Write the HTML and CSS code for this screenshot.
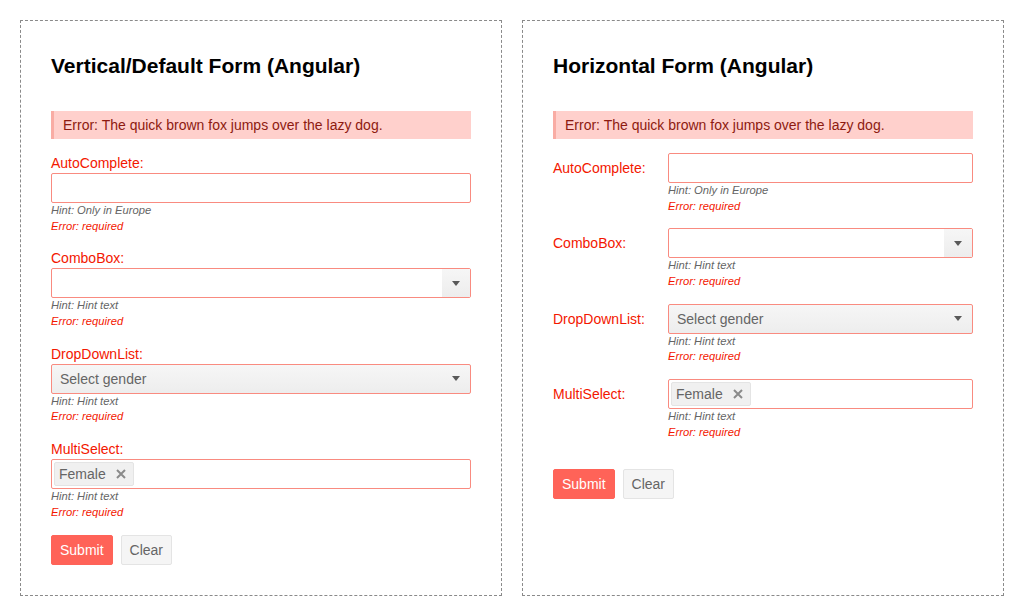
FILE: index.html
```html
<!DOCTYPE html>
<html>
<head>
<meta charset="utf-8">
<link rel="stylesheet" href="styles.css">
</head>
<body>
<div class="page">
  <section class="panel">
    <h2 class="title">Vertical/Default Form (Angular)</h2>
    <div class="banner">Error: The quick brown fox jumps over the lazy dog.</div>
    <div class="field vfield">
      <label class="lbl">AutoComplete:</label>
      <div class="ctl">
        <div class="input"></div>
        <div class="hint">Hint: Only in Europe</div>
        <div class="err">Error: required</div>
      </div>
    </div>
    <div class="field vfield">
      <label class="lbl">ComboBox:</label>
      <div class="ctl">
        <div class="input combo"><span class="cbtn"><i class="arrow"></i></span></div>
        <div class="hint">Hint: Hint text</div>
        <div class="err">Error: required</div>
      </div>
    </div>
    <div class="field vfield">
      <label class="lbl">DropDownList:</label>
      <div class="ctl">
        <div class="input ddl"><span class="ph">Select gender</span><i class="arrow"></i></div>
        <div class="hint">Hint: Hint text</div>
        <div class="err">Error: required</div>
      </div>
    </div>
    <div class="field vfield">
      <label class="lbl">MultiSelect:</label>
      <div class="ctl">
        <div class="input multi"><span class="chip">Female<svg class="x" width="10" height="10" viewBox="0 0 10 10"><path d="M1 1L9 9M9 1L1 9" stroke="#8a8a8a" stroke-width="2"/></svg></span></div>
        <div class="hint">Hint: Hint text</div>
        <div class="err">Error: required</div>
      </div>
    </div>
    <div class="actions vactions">
      <button class="btn primary">Submit</button>
      <button class="btn">Clear</button>
    </div>
  </section>

  <section class="panel">
    <h2 class="title">Horizontal Form (Angular)</h2>
    <div class="banner">Error: The quick brown fox jumps over the lazy dog.</div>
    <div class="field hfield">
      <label class="lbl">AutoComplete:</label>
      <div class="ctl">
        <div class="input"></div>
        <div class="hint">Hint: Only in Europe</div>
        <div class="err">Error: required</div>
      </div>
    </div>
    <div class="field hfield">
      <label class="lbl">ComboBox:</label>
      <div class="ctl">
        <div class="input combo"><span class="cbtn"><i class="arrow"></i></span></div>
        <div class="hint">Hint: Hint text</div>
        <div class="err">Error: required</div>
      </div>
    </div>
    <div class="field hfield">
      <label class="lbl">DropDownList:</label>
      <div class="ctl">
        <div class="input ddl"><span class="ph">Select gender</span><i class="arrow"></i></div>
        <div class="hint">Hint: Hint text</div>
        <div class="err">Error: required</div>
      </div>
    </div>
    <div class="field hfield">
      <label class="lbl">MultiSelect:</label>
      <div class="ctl">
        <div class="input multi"><span class="chip">Female<svg class="x" width="10" height="10" viewBox="0 0 10 10"><path d="M1 1L9 9M9 1L1 9" stroke="#8a8a8a" stroke-width="2"/></svg></span></div>
        <div class="hint">Hint: Hint text</div>
        <div class="err">Error: required</div>
      </div>
    </div>
    <div class="actions hactions">
      <button class="btn primary">Submit</button>
      <button class="btn">Clear</button>
    </div>
  </section>
</div>
</body>
</html>
```

FILE: styles.css
```css
* { box-sizing: border-box; }
html, body { margin: 0; padding: 0; background: #fff; }
body {
  font-family: "Liberation Sans", Arial, sans-serif;
  font-size: 14px;
  color: #424242;
}
.page {
  display: flex;
  gap: 20px;
  padding: 20px;
  align-items: stretch;
}
.panel {
  width: 482px;
  border: 1px dashed #8a8a8a;
  padding: 30px 30px 30px 30px;
}
.title {
  margin: 2px 0 0;
  font-size: 21px;
  line-height: 1.2;
  font-weight: bold;
  color: #000;
}
.banner {
  margin-top: 32.8px;
  height: 28px;
  line-height: 28px;
  background: #ffd0cc;
  border-left: 3px solid #f9aca4;
  padding-left: 9px;
  color: #8e1a10;
  font-size: 14px;
}
.field { margin-top: 14px; }
.vfield .lbl {
  display: block;
  height: 20px;
  line-height: 21px;
  color: #f31700;
}
.hfield { display: flex; }
.hfield .lbl {
  width: 115px;
  flex: none;
  line-height: 30px;
  color: #f31700;
}
.hfield .ctl { flex: 1; }
.input {
  height: 30px;
  border: 1px solid #f98b80;
  border-radius: 2px;
  background: #fff;
  display: flex;
  align-items: center;
}
.hint, .err {
  font-size: 11.2px;
  line-height: 1.4;
  font-style: italic;
}
.hint { color: #656565; }
.err { color: #f31700; }
.combo { justify-content: flex-end; }
.cbtn {
  width: 28px;
  height: 28px;
  background: linear-gradient(#f6f6f6, #ededed);
  display: flex;
  align-items: center;
  justify-content: center;
}
.arrow {
  display: block;
  width: 0;
  height: 0;
  border-left: 4px solid transparent;
  border-right: 4px solid transparent;
  border-top: 5px solid #595959;
}
.ddl {
  background: linear-gradient(#f6f6f6, #ededed);
  justify-content: space-between;
  padding: 0 10px 0 8px;
}
.ph { color: #656565; }
.multi { padding-left: 2px; }
.chip {
  height: 24px;
  display: flex;
  align-items: center;
  gap: 10px;
  background: #f0f0f0;
  border: 1px solid #e4e4e4;
  border-radius: 2px;
  padding: 0 7px 0 4px;
  color: #656565;
}
.x { display: block; }
.actions { display: flex; gap: 8px; }
.vactions { margin-top: 14.7px; }
.hactions { margin-top: 28.7px; }
.btn {
  font-family: inherit;
  font-size: 14px;
  height: 30px;
  padding: 0 8px;
  border: 1px solid #e4e4e4;
  border-radius: 2px;
  background: #f5f5f5;
  color: #656565;
}
.btn.primary {
  background: #ff6358;
  border-color: #ff6358;
  color: #fff;
}
```
